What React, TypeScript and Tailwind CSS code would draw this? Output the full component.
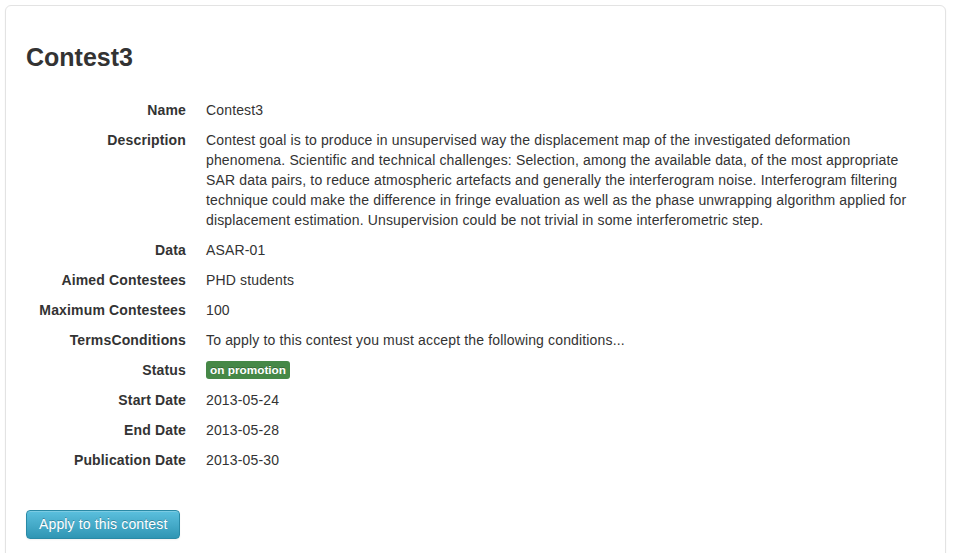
const descriptionLines = [
  'Contest goal is to produce in unsupervised way the displacement map of the investigated deformation',
  'phenomena. Scientific and technical challenges: Selection, among the available data, of the most appropriate',
  'SAR data pairs, to reduce atmospheric artefacts and generally the interferogram noise. Interferogram filtering',
  'technique could make the difference in fringe evaluation as well as the phase unwrapping algorithm applied for',
  'displacement estimation. Unsupervision could be not trivial in some interferometric step.',
];

type Row = { label: string; value: React.ReactNode };

const rows: Row[] = [
  { label: 'Name', value: 'Contest3' },
  {
    label: 'Description',
    value: (
      <>
        {descriptionLines.map((line) => (
          <span key={line} className="block whitespace-nowrap">
            {line}
          </span>
        ))}
      </>
    ),
  },
  { label: 'Data', value: 'ASAR-01' },
  { label: 'Aimed Contestees', value: 'PHD students' },
  { label: 'Maximum Contestees', value: '100' },
  { label: 'TermsConditions', value: 'To apply to this contest you must accept the following conditions...' },
  {
    label: 'Status',
    value: (
      <span className="inline-block rounded-[3px] bg-[#468847] px-[4px] py-[2px] align-[1px] text-[11.8px] font-bold leading-[14px] tracking-normal text-white [text-shadow:0_-1px_0_rgba(0,0,0,0.25)]">
        on promotion
      </span>
    ),
  },
  { label: 'Start Date', value: '2013-05-24' },
  { label: 'End Date', value: '2013-05-28' },
  { label: 'Publication Date', value: '2013-05-30' },
];

export default function App() {
  return (
    <div className="min-h-[553px] bg-white pl-[5px] pt-[5px] font-['Helvetica_Neue','Liberation_Sans',Arial,sans-serif] text-[14px] leading-[20px] tracking-[0.15px] text-[#333]">
      <div className="h-[560px] w-[941px] rounded-[6px] border border-[#e3e3e3] bg-white px-[20px] pt-[20px] shadow-[0_1px_2px_rgba(0,0,0,0.05)]">
        <h2 className="pt-[11px] text-[25px] font-bold leading-[40px] tracking-normal text-[#333]">Contest3</h2>

        <dl className="mt-[23px]">
          {rows.map((row) => (
            <div key={row.label} className="mb-[10px] flex gap-[20px]">
              <dt className="w-[160px] shrink-0 text-right font-bold">{row.label}</dt>
              <dd>{row.value}</dd>
            </div>
          ))}
        </dl>

        <button className="mt-[30px] rounded-[4px] border border-[#2a8aa6] bg-gradient-to-b from-[#5bc0de] to-[#2f96b4] px-[12px] py-[4px] text-[14px] leading-[19px] text-white shadow-[inset_0_1px_0_rgba(255,255,255,0.2),0_1px_2px_rgba(0,0,0,0.05)] [text-shadow:0_-1px_0_rgba(0,0,0,0.25)]">
          Apply to this contest
        </button>
      </div>
    </div>
  );
}
